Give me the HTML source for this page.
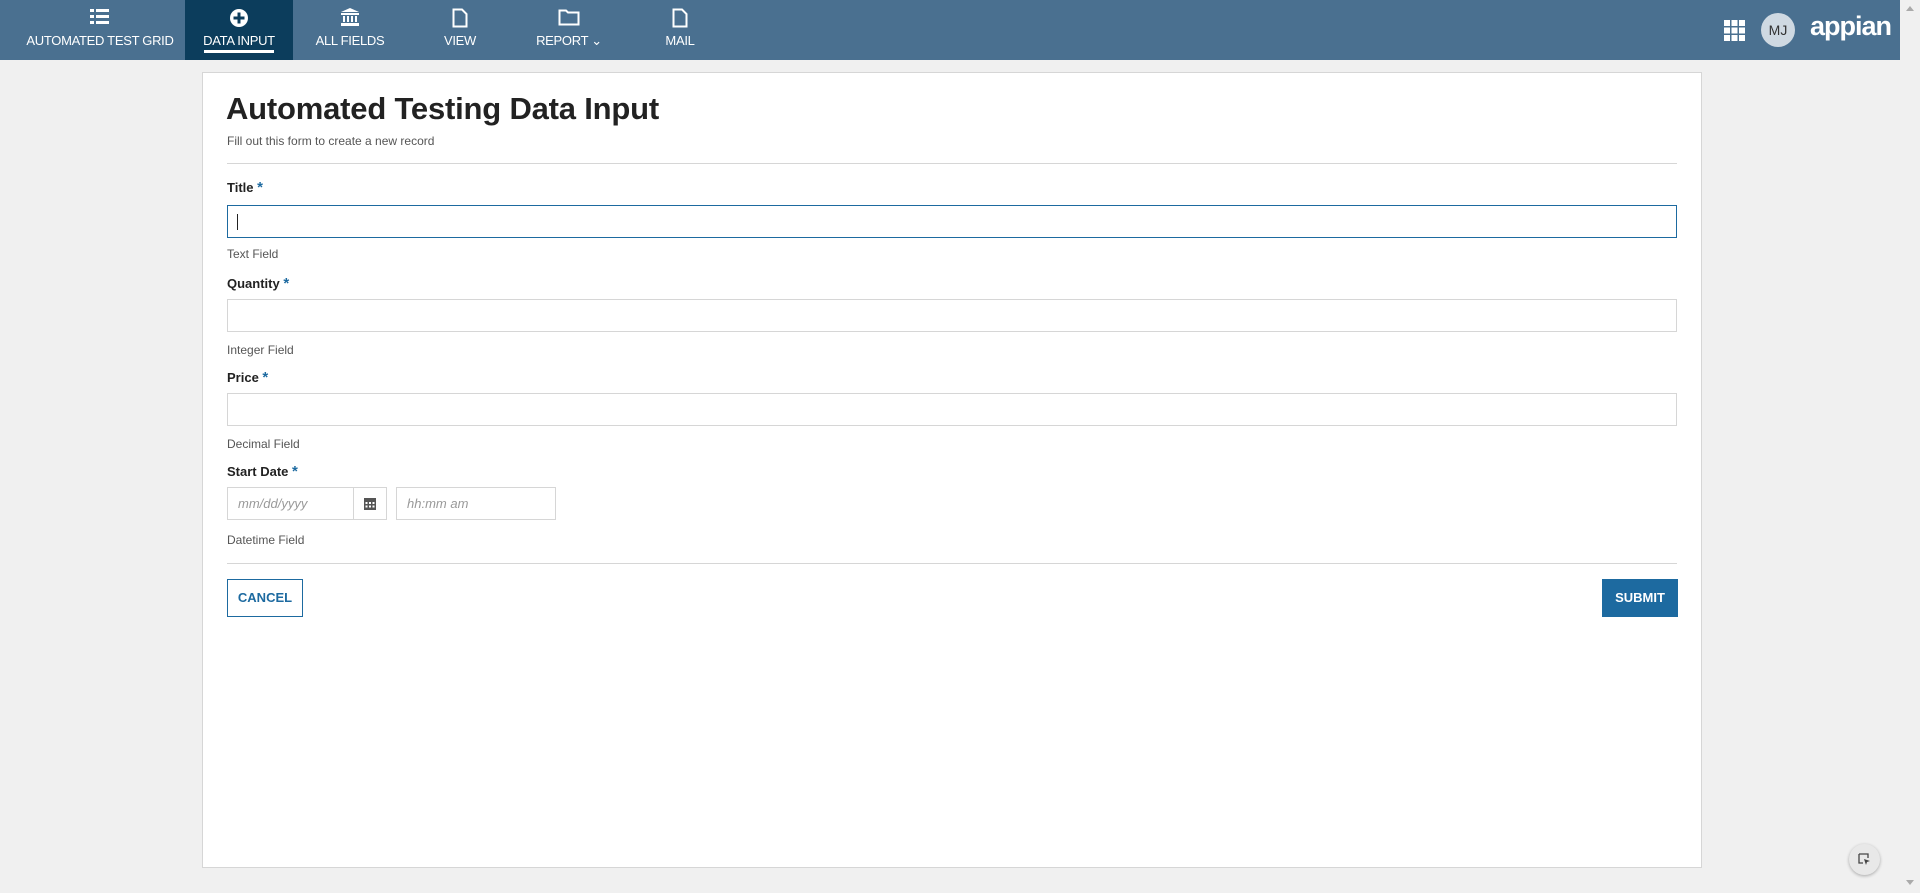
<!DOCTYPE html>
<html><head><style>
*{box-sizing:border-box;margin:0;padding:0}
body{width:1920px;height:893px;background:#f0f0f0;font-family:"Liberation Sans",sans-serif;position:relative;overflow:hidden;color:#222}
.nav{position:absolute;left:0;top:0;width:1900px;height:60px;background:#4a7090}
.item{position:absolute;top:0;height:60px;text-align:center;color:#fff;font-size:13px}
.item svg{position:absolute;left:50%;top:8px;transform:translateX(-50%)}
.item span{position:absolute;left:0;right:0;top:33px;white-space:nowrap;letter-spacing:-0.3px}
.active{background:#0c3d5c}
.ul{position:absolute;left:19px;right:19px;top:50px;height:3px;background:#fff}
.sb{position:absolute;right:0;top:0;width:20px;height:893px;background:#f0f0f0}
.card{position:absolute;left:202px;top:72px;width:1500px;height:796px;background:#fff;border:1px solid #d6d6d6}
.abs{position:absolute}
h1{position:absolute;left:23px;top:18px;font-size:31px;font-weight:bold;color:#222;letter-spacing:-0.2px}
.sub{left:24px;top:61px;font-size:12px;color:#555}
.hr{left:24px;width:1450px;height:1px;background:#d6d6d6}
.lbl{left:24px;font-size:13px;font-weight:bold;color:#222}
.lbl b{color:#1d6aa0;font-size:15px}
.inp{left:24px;width:1450px;height:33px;border:1px solid #d6d6d6;background:#fff}
.help{left:24px;font-size:12px;color:#555}
.ph{font-size:13px;color:#999;font-style:italic;position:absolute;left:10px;top:8px}
</style></head><body>
<div class="nav">
 <div class="item" style="left:10px;width:180px"><svg width="22" height="18" viewBox="0 0 22 18"><g fill="#fff"><rect x="1" y="1" width="4" height="3"/><rect x="1" y="7" width="4" height="3"/><rect x="1" y="13" width="4" height="3"/><rect x="7" y="1" width="13" height="3"/><rect x="7" y="7" width="13" height="3"/><rect x="7" y="13" width="13" height="3"/></g></svg><span>AUTOMATED TEST GRID</span></div>
 <div class="item active" style="left:185px;width:108px"><svg width="20" height="20" viewBox="0 0 20 20"><circle cx="10" cy="10" r="9" fill="#fff"/><rect x="8.5" y="4.5" width="3" height="11" fill="#0c3d5c"/><rect x="4.5" y="8.5" width="11" height="3" fill="#0c3d5c"/></svg><span>DATA INPUT</span><div class="ul"></div></div>
 <div class="item" style="left:300px;width:100px"><svg width="20" height="18" viewBox="0 0 20 18"><g fill="#fff"><path d="M10 0L19 4H1Z"/><rect x="1" y="5" width="18" height="2"/><rect x="3" y="8" width="2" height="6"/><rect x="7" y="8" width="2" height="6"/><rect x="11" y="8" width="2" height="6"/><rect x="15" y="8" width="2" height="6"/><rect x="1" y="15" width="18" height="3"/></g></svg><span>ALL FIELDS</span></div>
 <div class="item" style="left:410px;width:100px"><svg width="16" height="20" viewBox="0 0 16 20"><path d="M1.5 1.5H10L14.5 6V18.5H1.5Z" fill="none" stroke="#fff" stroke-width="2"/></svg><span>VIEW</span></div>
 <div class="item" style="left:519px;width:100px"><svg width="22" height="18" viewBox="0 0 22 18"><path d="M1.5 2.5H8L10 4.5H20.5V16.5H1.5Z" fill="none" stroke="#fff" stroke-width="2"/></svg><span>REPORT &#8964;</span></div>
 <div class="item" style="left:630px;width:100px"><svg width="16" height="20" viewBox="0 0 16 20"><path d="M1.5 1.5H10L14.5 6V18.5H1.5Z" fill="none" stroke="#fff" stroke-width="2"/></svg><span>MAIL</span></div>
 <svg class="abs" style="left:1724px;top:20px" width="21" height="21" viewBox="0 0 21 21"><g fill="#fff"><rect x="0" y="0" width="6" height="6"/><rect x="7.5" y="0" width="6" height="6"/><rect x="15" y="0" width="6" height="6"/><rect x="0" y="7.5" width="6" height="6"/><rect x="7.5" y="7.5" width="6" height="6"/><rect x="15" y="7.5" width="6" height="6"/><rect x="0" y="15" width="6" height="6"/><rect x="7.5" y="15" width="6" height="6"/><rect x="15" y="15" width="6" height="6"/></g></svg>
 <div class="abs" style="left:1761px;top:13px;width:34px;height:34px;border-radius:50%;background:#cfd9e2;color:#333;font-size:14px;text-align:center;line-height:34px">MJ</div>
 <div class="abs" style="left:1810px;top:11px;color:#fff;font-size:27px;font-weight:bold;letter-spacing:-1px">appian</div>
</div>
<div class="sb"><div class="abs" style="left:6px;top:6px;border:4px solid transparent;border-bottom:5px solid #aaa;border-top:0"></div><div class="abs" style="left:6px;top:880px;border:4px solid transparent;border-top:5px solid #aaa;border-bottom:0"></div></div>
<div class="card">
 <h1>Automated Testing Data Input</h1>
 <div class="abs sub">Fill out this form to create a new record</div>
 <div class="abs hr" style="top:90px"></div>
 <div class="abs lbl" style="top:106px">Title <b>*</b></div>
 <div class="abs inp" style="top:132px;border-color:#1d6aa0"><div class="abs" style="left:9px;top:8px;width:1px;height:16px;background:#222"></div></div>
 <div class="abs help" style="top:174px">Text Field</div>
 <div class="abs lbl" style="top:202px">Quantity <b>*</b></div>
 <div class="abs inp" style="top:226px"></div>
 <div class="abs help" style="top:270px">Integer Field</div>
 <div class="abs lbl" style="top:296px">Price <b>*</b></div>
 <div class="abs inp" style="top:320px"></div>
 <div class="abs help" style="top:364px">Decimal Field</div>
 <div class="abs lbl" style="top:390px">Start Date <b>*</b></div>
 <div class="abs inp" style="top:414px;width:160px"><span class="ph">mm/dd/yyyy</span><div class="abs" style="left:125px;top:0;width:1px;height:31px;background:#d6d6d6"></div><svg class="abs" style="left:136px;top:9px" width="12" height="13" viewBox="0 0 12 13"><rect x="0" y="1" width="12" height="12" fill="#555"/><g fill="#fff"><rect x="1.5" y="5" width="2" height="2"/><rect x="5" y="5" width="2" height="2"/><rect x="8.5" y="5" width="2" height="2"/><rect x="1.5" y="8.5" width="2" height="2"/><rect x="5" y="8.5" width="2" height="2"/><rect x="8.5" y="8.5" width="2" height="2"/></g></svg></div>
 <div class="abs inp" style="top:414px;left:193px;width:160px"><span class="ph">hh:mm am</span></div>
 <div class="abs help" style="top:460px">Datetime Field</div>
 <div class="abs hr" style="top:490px"></div>
 <div class="abs" style="left:24px;top:506px;width:76px;height:38px;border:1px solid #1d6aa0;color:#1d6aa0;font-size:13px;font-weight:bold;text-align:center;line-height:36px">CANCEL</div>
 <div class="abs" style="left:1399px;top:506px;width:76px;height:38px;background:#1d6aa0;color:#fff;font-size:13px;font-weight:bold;text-align:center;line-height:38px">SUBMIT</div>
</div>
<div class="abs" style="left:1849px;top:844px;width:31px;height:31px;border-radius:50%;background:#e8e8e8;box-shadow:0 1px 3px rgba(0,0,0,.3)"><svg class="abs" style="left:9px;top:9px" width="13" height="13" viewBox="0 0 13 13"><path d="M1 1H10V5M1 1V10H5" fill="none" stroke="#444" stroke-width="1.3"/><path d="M6 6L12 8L9 9L8 12Z" fill="#444"/></svg></div>
</body></html>
